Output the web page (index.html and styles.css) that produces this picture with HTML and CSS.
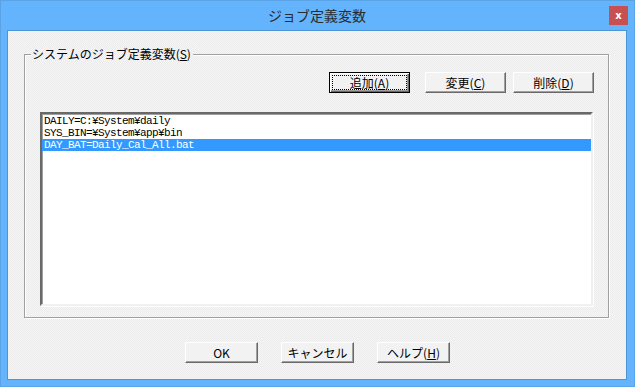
FILE: index.html
```html
<!DOCTYPE html>
<html lang="ja">
<head>
<meta charset="utf-8">
<link rel="stylesheet" href="styles.css">
</head>
<body>
<div class="window">
  <div class="titlebar">
    <span class="title">ジョブ定義変数</span>
    <span class="close">x</span>
  </div>
  <div class="client">
    <div class="group">
      <span class="legend">システムのジョブ定義変数(<u>S</u>)</span>
      <div class="toolbar">
        <button class="btn btn-default"><span class="focus">追加(<u>A</u>)</span></button>
        <button class="btn btn-mid">変更(<u>C</u>)</button>
        <button class="btn">削除(<u>D</u>)</button>
      </div>
      <div class="listbox">
        <div class="item">DAILY=C:¥System¥daily</div>
        <div class="item">SYS_BIN=¥System¥app¥bin</div>
        <div class="item selected">DAY_BAT=Daily_Cal_All.bat</div>
      </div>
    </div>
    <div class="footer">
      <button class="btn btn-small">OK</button>
      <button class="btn btn-small">キャンセル</button>
      <button class="btn btn-small">ヘルプ(<u>H</u>)</button>
    </div>
  </div>
</div>
</body>
</html>
```
FILE: styles.css
```css
* { box-sizing: border-box; }
html, body { margin: 0; padding: 0; }
body { width: 635px; height: 387px; overflow: hidden; }
.window {
  width: 635px;
  height: 387px;
  background: #64b4fd;
  border: 1px solid #5aa3e6;
  display: flex;
  flex-direction: column;
  padding: 0 7px 6px 6px;
  font-family: "Noto Sans CJK JP", "Liberation Sans", sans-serif;
  font-size: 12px;
  color: #000;
}
.titlebar {
  height: 29px;
  flex: none;
  display: flex;
  align-items: center;
  justify-content: center;
  position: relative;
}
.title {
  font-size: 14px;
  color: #2b2b2b;
  margin-top: -1px;
}
.close {
  position: absolute;
  right: -1px;
  top: 5px;
  width: 19px;
  height: 19px;
  background: #c75050;
  color: #fff;
  font-family: "DejaVu Sans", sans-serif;
  font-weight: bold;
  font-size: 10px;
  display: flex;
  align-items: center;
  justify-content: center;
  line-height: 1;
}
.client {
  flex: 1;
  border: 1px solid #4e95d8;
  background-color: #f1f1f1;
  background-image: repeating-conic-gradient(#ebebeb 0 25%, #f6f6f6 0 50%);
  background-size: 2px 2px;
  display: flex;
  flex-direction: column;
  padding: 23px 17px 0 16px;
}
.group {
  position: relative;
  height: 264px;
  flex: none;
  border: 1px solid #a0a0a0;
  box-shadow: 1px 1px 0 #fff, inset 1px 1px 0 #fff;
  padding: 17px 14px 11px 15px;
  display: flex;
  flex-direction: column;
}
.legend {
  position: absolute;
  left: 6px;
  top: -8px;
  padding: 0 2px 0 1px;
  line-height: 14px;
  font-size: 12px;
  background-color: #f1f1f1;
  background-image: repeating-conic-gradient(#ebebeb 0 25%, #f6f6f6 0 50%);
  background-size: 2px 2px;
}
.legend u { text-underline-offset: 1px; }
.toolbar {
  display: flex;
  justify-content: flex-end;
  height: 21px;
  flex: none;
}
.btn-mid { margin: 0 7px 0 15px; }
.btn {
  width: 81px;
  height: 21px;
  padding: 0;
  margin-top: 0;
  margin-bottom: 0;
  font-family: "Noto Sans CJK JP", sans-serif;
  font-size: 12px;
  line-height: 1;
  color: #000;
  background: #f2f2f2;
  border: 1px solid;
  border-color: #fff #696969 #696969 #fff;
  box-shadow: inset -1px -1px 0 #a0a0a0;
  display: flex;
  align-items: center;
  justify-content: center;
}
.btn u { text-underline-offset: 1px; }
.btn-default {
  border: 1px solid #000;
  box-shadow: inset 1px 1px 0 #fff, inset -1px -1px 0 #696969, inset -2px -2px 0 #a0a0a0;
}
.focus {
  width: 73px;
  height: 13px;
  outline: 1px dotted #000;
  display: flex;
  align-items: center;
  justify-content: center;
}
.listbox {
  margin-top: 19px;
  margin-right: 1px;
  flex: 1;
  background: #fff;
  border: 2px solid;
  border-color: #696969 #f0f0f0 #f0f0f0 #696969;
  box-shadow: inset 1px 1px 0 #a0a0a0, 1px 1px 0 #fff;
  padding: 1px 0 0 0;
  font-family: "Liberation Mono", "DejaVu Sans Mono", monospace;
  font-size: 11px;
  letter-spacing: -0.6px;
}
.item {
  height: 12px;
  line-height: 12px;
  padding-left: 2px;
  white-space: pre;
}
.item.selected {
  background: #3399ff;
  color: #fff;
}
.footer {
  display: flex;
  justify-content: center;
  gap: 23px;
  padding-top: 24px;
  padding-left: 2px;
}
.btn-small { width: 73px; }
```
